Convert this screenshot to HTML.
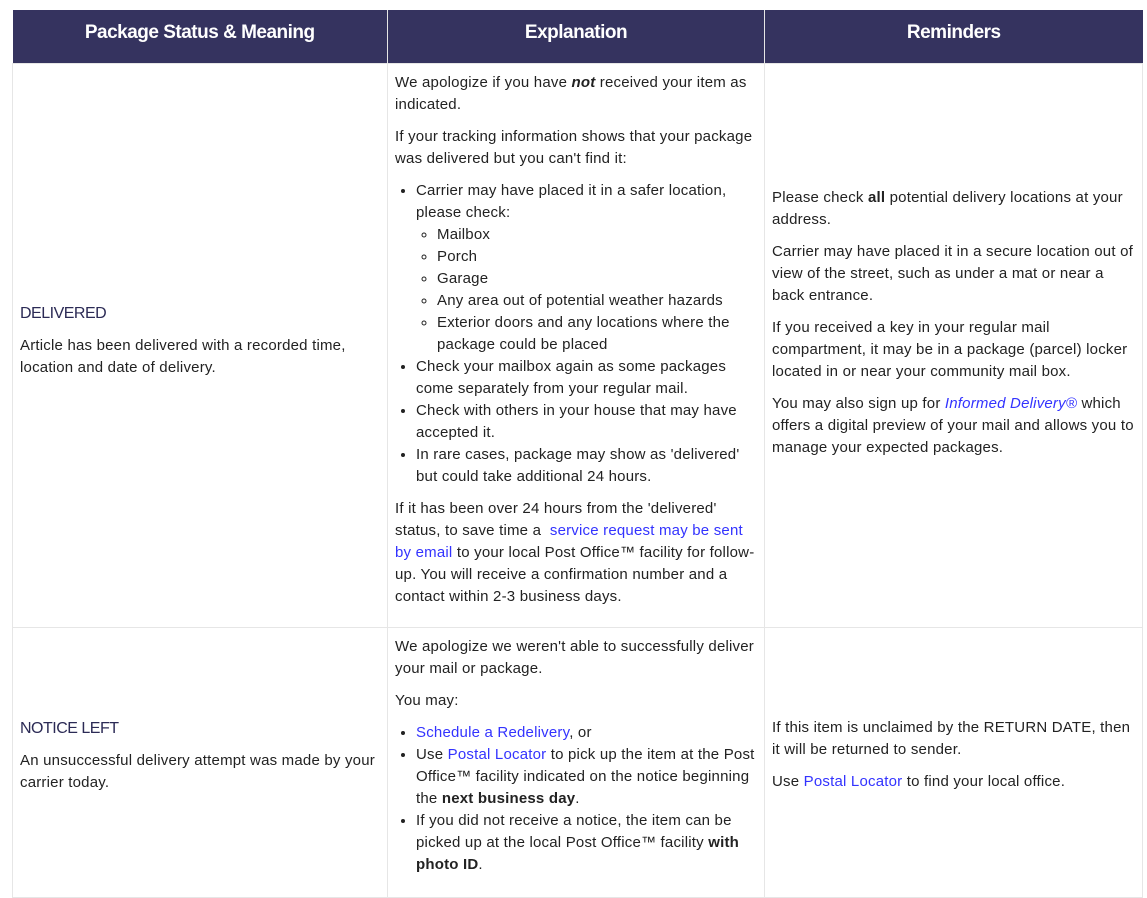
<!DOCTYPE html>
<html><head><meta charset="utf-8"><style>
html,body{margin:0;padding:0;background:#fff;}
body{font-family:"Liberation Sans",Arial,sans-serif;font-size:15px;line-height:22px;color:#222;letter-spacing:0.2px;}
table{position:absolute;left:12px;top:10px;border-collapse:collapse;table-layout:fixed;width:1130px;}
th{background:#35335f;color:#fff;font-size:19px;font-weight:bold;height:47px;padding:0 0 6px 0;text-align:center;letter-spacing:-0.5px;border-right:1px solid #e6e6e6;box-sizing:border-box;}
tr.h{height:53px;}
th:last-child{border-right:none;}
td{border:1px solid #e6e6e6;vertical-align:middle;padding:8px 7px 8px 7px;}
td.t{vertical-align:top;padding-top:8px;}
td p{margin:0 0 10px 0;}
td p:last-child{margin-bottom:0;}
ul{margin:0 0 10px 0;padding-left:21px;}
ul ul{margin:0;list-style:circle;}
a{color:#3333ff;text-decoration:none;}
.st{color:#2b2a55;font-size:16px;letter-spacing:-0.5px;}
tr.r1{height:564px;}
tr.r2{height:270px;}
</style></head><body>
<table>
<colgroup><col style="width:375px"><col style="width:377px"><col style="width:378px"></colgroup>
<tr class="h"><th>Package Status &amp; Meaning</th><th>Explanation</th><th>Reminders</th></tr>
<tr class="r1">
<td style="padding-bottom:16px"><p class="st">DELIVERED</p><p>Article has been delivered with a recorded time, location and date of delivery.</p></td>
<td class="t"><p>We apologize if you have <b><i>not</i></b> received your item as indicated.</p>
<p>If your tracking information shows that your package was delivered but you can't find it:</p>
<ul><li>Carrier may have placed it in a safer location, please check:
<ul><li>Mailbox</li><li>Porch</li><li>Garage</li><li>Any area out of potential weather hazards</li><li>Exterior doors and any locations where the package could be placed</li></ul></li>
<li>Check your mailbox again as some packages come separately from your regular mail.</li>
<li>Check with others in your house that may have accepted it.</li>
<li>In rare cases, package may show as 'delivered' but could take additional 24 hours.</li></ul>
<p>If it has been over 24 hours from the 'delivered' status, to save time a &nbsp;<a>service request may be sent by email</a> to your local Post Office™ facility for follow-up. You will receive a confirmation number and a contact within 2-3 business days.</p></td>
<td style="padding-bottom:52px"><p>Please check <b>all</b> potential delivery locations at your address.</p>
<p>Carrier may have placed it in a secure location out of view of the street, such as under a mat or near a back entrance.</p>
<p>If you received a key in your regular mail compartment, it may be in a package (parcel) locker located in or near your community mail box.</p>
<p>You may also sign up for <a><i>Informed Delivery®</i></a> which offers a digital preview of your mail and allows you to manage your expected packages.</p></td>
</tr>
<tr class="r2">
<td style="padding-bottom:20px"><p class="st">NOTICE LEFT</p><p>An unsuccessful delivery attempt was made by your carrier today.</p></td>
<td class="t"><p>We apologize we weren't able to successfully deliver your mail or package.</p>
<p>You may:</p>
<ul><li><a>Schedule a Redelivery</a>, or</li>
<li>Use <a>Postal Locator</a> to pick up the item at the Post Office™ facility indicated on the notice beginning the <b>next business day</b>.</li>
<li>If you did not receive a notice, the item can be picked up at the local Post Office™ facility <b>with photo ID</b>.</li></ul></td>
<td style="padding-bottom:22px"><p>If this item is unclaimed by the RETURN DATE, then it will be returned to sender.</p>
<p>Use <a>Postal Locator</a> to find your local office.</p></td>
</tr>
</table>
</body></html>
